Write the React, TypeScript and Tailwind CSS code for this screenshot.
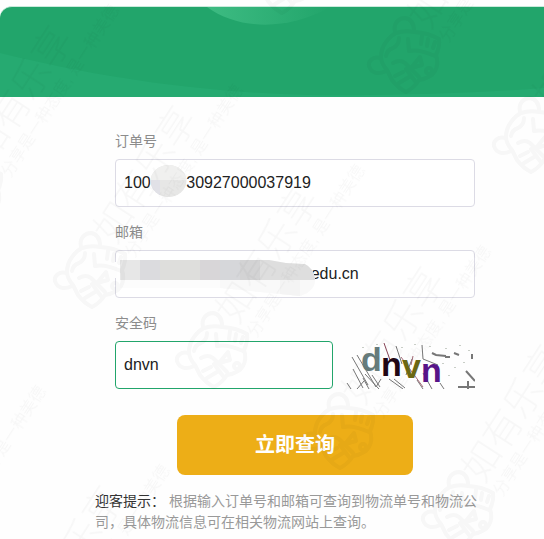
import React, { useState } from 'react';

const sans = "font-['Liberation_Sans','Noto_Sans_CJK_SC',sans-serif]";
const inputStyle = 'h-12 w-full min-w-0 rounded border bg-white px-2 text-base text-[#222] outline-none';
const labelStyle = 'mb-2 block text-sm leading-5 text-[#8c8c8c]';

// centre of each tiger head in the repeated watermark
const marks = [
    [281, -22], [405, 57], [530, 137],
    [-33, 192], [91, 272], [213, 352], [339, 433], [459, 511],
    [-106, 573], [18, 652],
];

function Watermark() {
    return (
        <svg className="pointer-events-none absolute inset-0 h-full w-full overflow-hidden" aria-hidden="true">
            {marks.map(([x, y]) => (
                <g key={`${x},${y}`} transform={`translate(${x} ${y})`} opacity="0.03">
                    <g fill="none" stroke="#000" strokeWidth="4" strokeLinecap="round" strokeLinejoin="round">
                        <path d="M-10 -25C-12 -34 -6 -39 0 -39C6 -38 9 -33 9 -26" />
                        <path d="M-24 1C-32 -1 -37 4 -36 9C-34 16 -27 18 -19 14" />
                        <path d="M-9 -24Q0 -27 9 -25Q24 -24 34 -18Q35 -10 31 -2Q34 7 30 14Q26 21 14 23Q9 31 1 35Q-7 31 -13 23L-18 13Q-24 6 -24 0Q-24 -8 -19 -15Q-15 -21 -9 -24Z" />
                        <path d="M-19 -1Q-18 -7 -12 -9Q-6 -12 -6 -19M3 -18L4 -6Q14 -8 30 -1" />
                        <path d="M17 -21L16 -13M23 -18L22 -11M30 -15L28 -9" />
                        <path d="M-12 6Q-5 2 0 6L14 20M6 11L15 0L17 8Z" />
                        <path d="M-10 19L-2 15M-6 26L4 20M1 12L10 24" />
                        <circle cx="24" cy="14" r="3" />
                    </g>
                    <g transform="rotate(-57)" fill="#000">
                        <text x="35" y="5" fontSize="38" fontWeight="300">如有乐享</text>
                        <text x="35" y="28" fontSize="16">分享是一种态度, 是一种美德</text>
                    </g>
                </g>
            ))}
        </svg>
    );
}

function Banner() {
    return (
        <header className="h-[91px] overflow-hidden rounded-tl-xl border-t border-[#c9eadb] bg-[#22a56b]">
            <svg className="h-full w-full" viewBox="0 0 544 90" preserveAspectRatio="none" aria-hidden="true">
                <defs>
                    <linearGradient id="glow" x1="0" x2="1">
                        <stop offset="0" stopColor="#3dbb82" />
                        <stop offset="1" stopColor="#22a56b" />
                    </linearGradient>
                </defs>
                <path d="M0 46C90 68 190 85 310 88C400 89 480 86 544 81V90H0Z" fill="#26aa71" />
                <path d="M207 0C238 23 288 24 330 0Z" fill="url(#glow)" />
            </svg>
        </header>
    );
}

function Captcha() {
    return (
        <svg className="h-12 w-full" viewBox="0 0 134 48" role="img" aria-label="dnvn">
            <rect width="134" height="48" fill="#fefefe" />
            <g fill="none" stroke="#777" strokeWidth="1">
                <path d="M11 16L27 44M16 14L35 46M12 28L22 47M6 42L10 48M24 33L38 48M31 34L39 46M22 37L28 48M48 38L62 48M53 38L64 47M55 5L61 23M71 18L65 34M81 4L82 18L97 24M82 32L91 48M99 42L103 48M76 39L82 48M16 48L23 40M35 46L40 38" />
                <path d="M91 12L95 14L105 15M104 16L109 16M113 12L118 14M131 13V18" strokeWidth="2" />
                <path d="M117 46H134M127 40V48M125 30L134 40" strokeWidth="2" />
                <path d="M60 16L82 46M72 15L70 24" stroke="#a66b78" />
                <path d="M43 2L49 19" stroke="#864456" />
            </g>
            <g fill="#c9cec7">
                <path d="M21 6h2v1h-2zM35 3h2v1h-2zM60 6h2v1h-2zM73 3h2v1h-2zM88 5h2v1h-2zM104 7h2v1h-2zM118 4h2v1h-2zM127 9h2v1h-2zM101 22h2v1h-2zM113 26h2v1h-2zM107 34h2v1h-2zM122 21h2v1h-2z" />
            </g>
            <g fontFamily="Liberation Sans Narrow, Liberation Sans" fontWeight="700">
                <text x="20" y="30" fontSize="34" fill="#667c7c">d</text>
                <text x="40" y="35" fontSize="34" fill="#210715">n</text>
                <text x="61" y="37" fontSize="34" fill="#6b6813">v</text>
                <text x="80" y="41" fontSize="34" fill="#571488">n</text>
            </g>
        </svg>
    );
}

export default function App() {
    const [order, setOrder] = useState('100' + ' '.repeat(8) + '30927000037919');
    const [email, setEmail] = useState(' '.repeat(42) + 'edu.cn');
    const [code, setCode] = useState('dnvn');

    return (
        <div className={`relative min-h-screen overflow-hidden bg-[#fefefe] pt-1.5 ${sans}`}>
            <Banner />
            <main className="pt-[34px] pr-[49px] pl-[95px]">
                <form className="flex flex-col gap-[15px] px-5" onSubmit={e => e.preventDefault()}>
                    <div>
                        <label htmlFor="order" className={labelStyle}>订单号</label>
                        <div className="relative">
                            <input id="order" className={`${inputStyle} border-[#dcdbe5]`} value={order} onChange={e => setOrder(e.target.value)} />
                            <svg className="pointer-events-none absolute top-[6px] left-[35px] h-8 w-[37px]" viewBox="0 0 37 32" aria-hidden="true">
                                <clipPath id="orderMask"><ellipse cx="18.5" cy="16" rx="18" ry="16" /></clipPath>
                                <g clipPath="url(#orderMask)">
                                    <rect width="37" height="32" fill="#e7e7e6" />
                                    <rect width="37" height="15" fill="#f0f0ef" />
                                    <rect y="15" width="10" height="17" fill="#e1e1e7" />
                                </g>
                            </svg>
                        </div>
                    </div>
                    <div>
                        <label htmlFor="email" className={labelStyle}>邮箱</label>
                        <div className="relative">
                            <input id="email" className={`${inputStyle} border-[#dcdbe5]`} value={email} onChange={e => setEmail(e.target.value)} />
                            <svg className="pointer-events-none absolute top-[10px] left-0 h-9 w-[200px]" viewBox="-5 0 200 36" aria-hidden="true">
                                <rect x="-5" y="2" width="2" height="16" fill="#fefefe" />
                                <clipPath id="emailMask"><path d="M0 0H149L166 3L185 4Q193 8 195 18Q196 31 180 36L140 32L100 28H0Z" /></clipPath>
                                <g clipPath="url(#emailMask)">
                                    <rect width="195" height="36" fill="#fcfcfc" />
                                    <rect x="100" y="20" width="95" height="16" fill="#f9f9f9" />
                                    <rect x="160" y="20" width="20" height="16" fill="#f4f4f4" />
                                    <rect width="20" height="20" fill="#e7e7e7" />
                                    <rect x="20" width="20" height="20" fill="#dbdbde" />
                                    <rect x="40" width="40" height="20" fill="#dededc" />
                                    <rect x="80" width="20" height="20" fill="#d8d6d8" />
                                    <rect x="100" width="20" height="20" fill="#d6d7da" />
                                    <rect x="120" width="20" height="20" fill="#d3d3d4" />
                                    <rect x="140" width="55" height="20" fill="#dedede" />
                                </g>
                            </svg>
                        </div>
                    </div>
                    <div>
                        <label htmlFor="code" className={labelStyle}>安全码</label>
                        <div className="grid grid-cols-[minmax(0,1fr)_134px] gap-2">
                            <input id="code" className={`${inputStyle} border-[#22a56b]`} value={code} onChange={e => setCode(e.target.value)} />
                            <Captcha />
                        </div>
                    </div>
                    <button type="submit" className="mx-auto mt-[11px] h-[60px] w-[236px] rounded-lg bg-[#edae17] text-xl font-bold text-white">
                        立即查询
                    </button>
                </form>
                <p className="mt-4 pr-3 text-sm leading-[21px] text-[#999]">
                    <span className="text-[#333]">迎客提示：</span> 根据输入订单号和邮箱可查询到物流单号和物流公司，具体物流信息可在相关物流网站上查询。
                </p>
            </main>
            <Watermark />
        </div>
    );
}
